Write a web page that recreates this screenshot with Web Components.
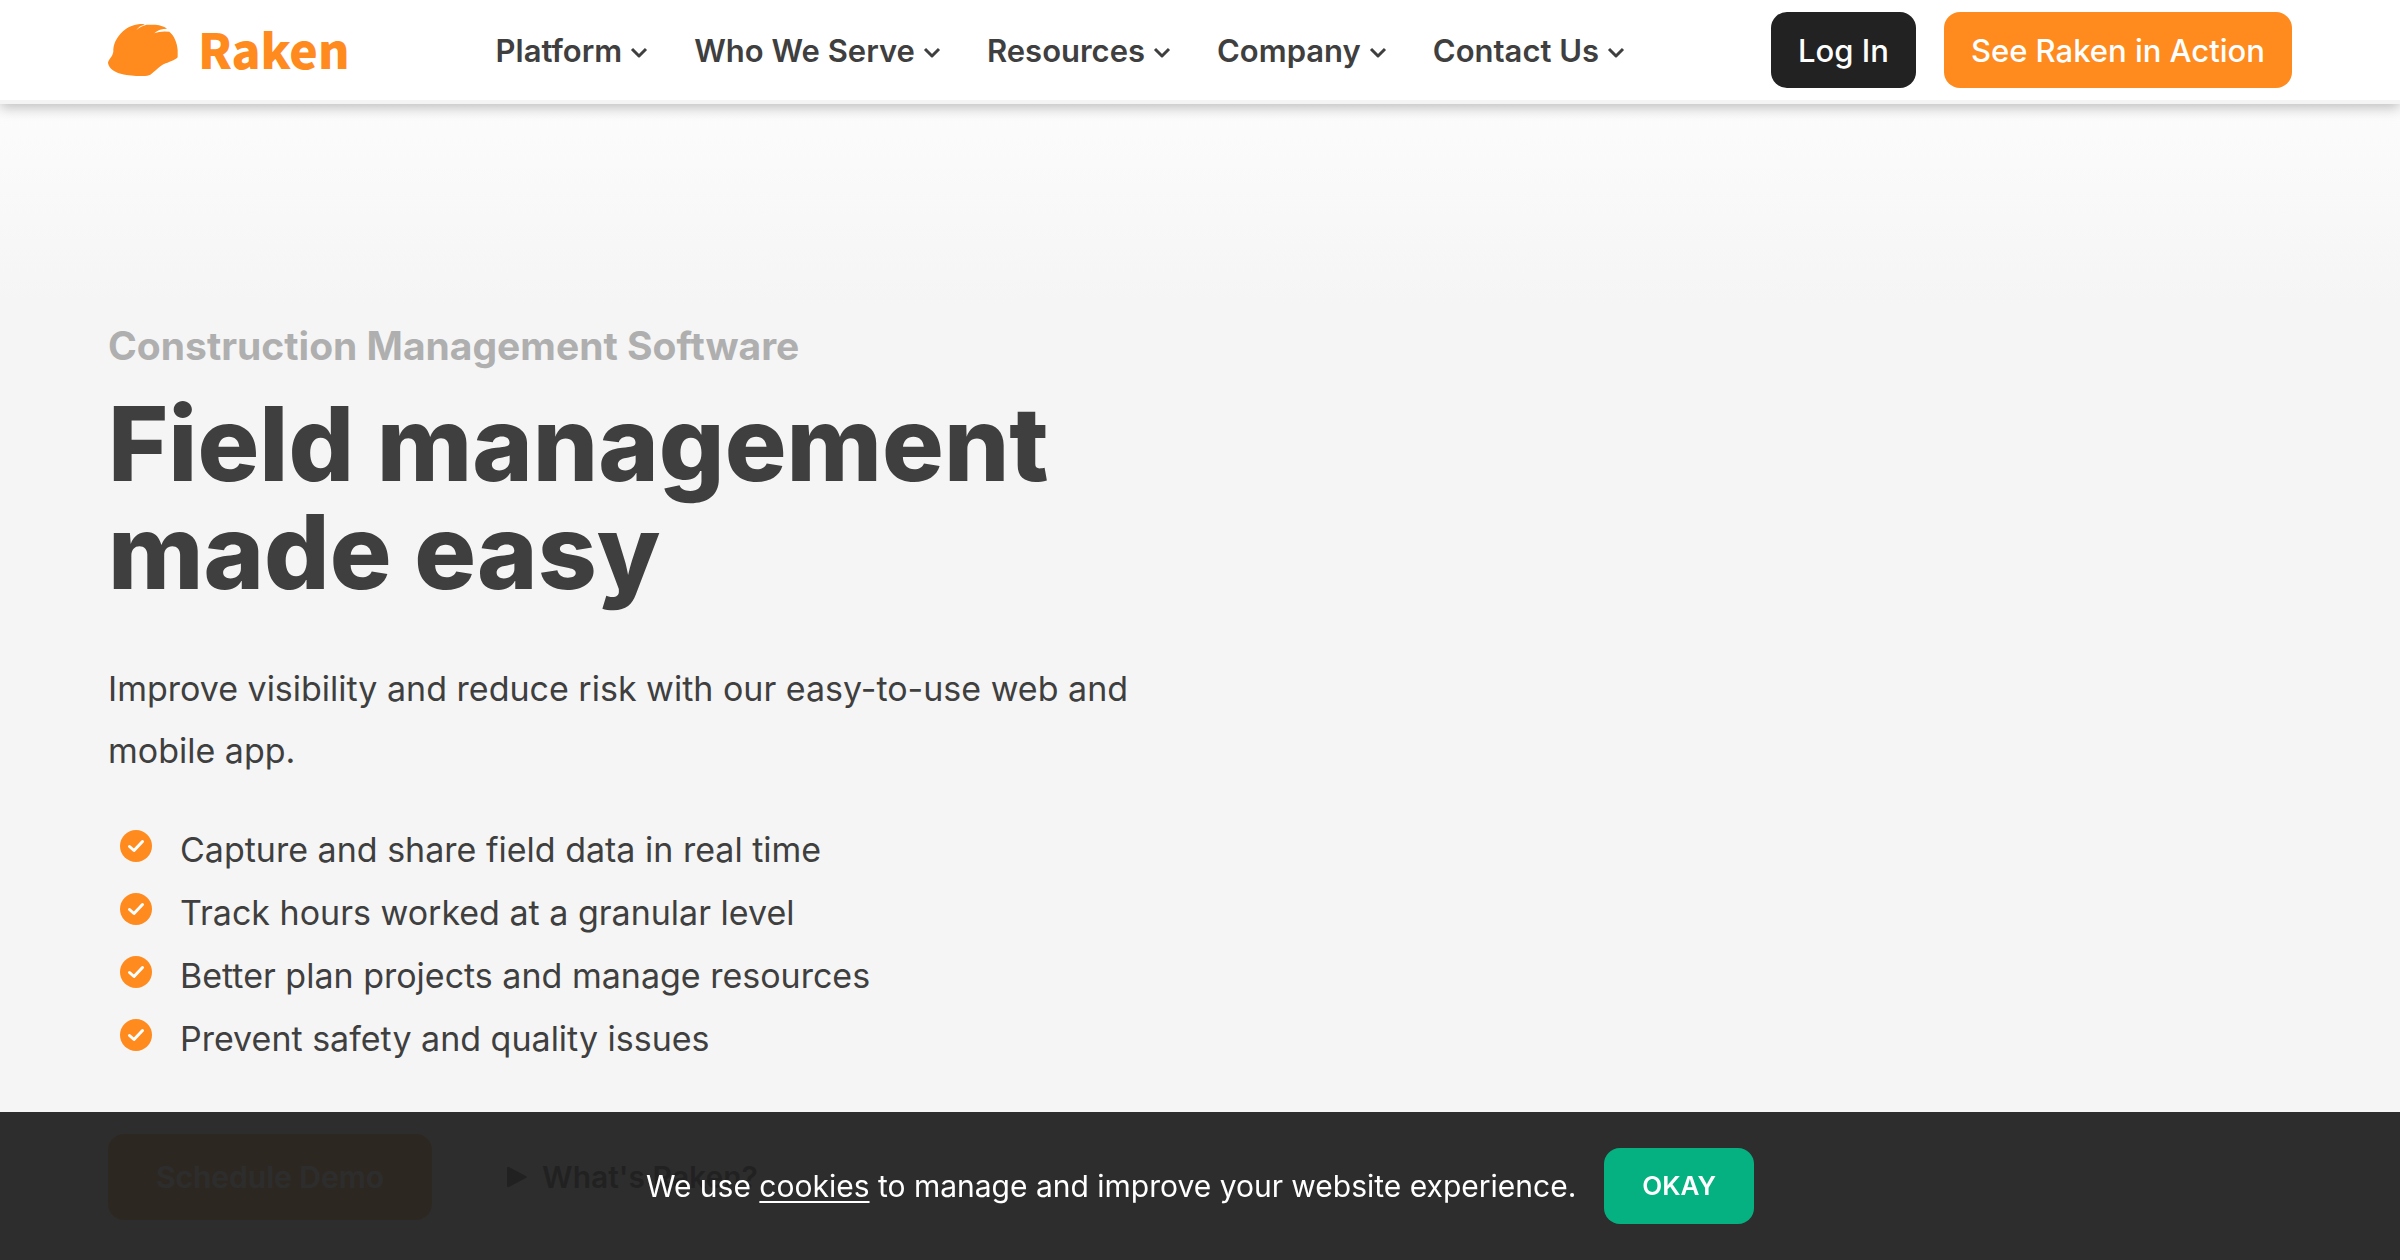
<!DOCTYPE html>
<html lang="en">
<head>
<meta charset="utf-8">
<title>Raken | Construction Management Software</title>
<meta name="viewport" content="width=device-width, initial-scale=1">
<style>
  :root {
    --orange: #ff8b1f;
    --ink: #3f3f3f;
    --dark: #222;
    --gutter: 108px;
  }
  body {
    margin: 0;
    min-height: 100vh;
    background: #f5f5f5;
    color: var(--ink);
    font-family: Inter, "Liberation Sans", sans-serif;
    font-size: 34px;
  }
</style>
</head>
<body>
<raken-header>
  <raken-logo slot="logo"></raken-logo>
  <raken-nav-item href="#platform">Platform</raken-nav-item>
  <raken-nav-item href="#who">Who We Serve</raken-nav-item>
  <raken-nav-item href="#resources">Resources</raken-nav-item>
  <raken-nav-item href="#company">Company</raken-nav-item>
  <raken-nav-item href="#contact">Contact Us</raken-nav-item>
  <raken-button slot="actions" variant="dark">Log In</raken-button>
  <raken-button slot="actions">See Raken in Action</raken-button>
</raken-header>
<raken-hero>
  <span slot="eyebrow">Construction Management Software</span>
  <span slot="title">Field management made easy</span>
  <span slot="lead">Improve visibility and reduce risk with our easy-to-use web and mobile app.</span>
  <raken-check>Capture and share field data in real time</raken-check>
  <raken-check>Track hours worked at a granular level</raken-check>
  <raken-check>Better plan projects and manage resources</raken-check>
  <raken-check>Prevent safety and quality issues</raken-check>
  <raken-button slot="actions" size="large">Schedule Demo</raken-button>
  <raken-video-link slot="actions" href="#video">What's Raken?</raken-video-link>
</raken-hero>
<raken-cookie-bar>
  We use <a href="#cookies">cookies</a> to manage and improve your website experience.
</raken-cookie-bar>

<script>
/**
 * Defines a custom element that renders the given markup in its shadow root.
 *
 * @param {string} name - The tag name.
 * @param {string} html - The styles and markup.
 * @param {Function} [setup] - Called with the host and its shadow root.
 */
const define = (name, html, setup) => {
  const template = document.createElement('template')
  template.innerHTML = html

  customElements.define(name, class extends HTMLElement {
    constructor () {
      super()
      this.attachShadow({ mode: 'open' })
        .appendChild(template.content.cloneNode(true))
    }

    connectedCallback () {
      setup?.(this, this.shadowRoot)
    }
  })
}

/**
 * Passes the host's href on to the link inside it.
 *
 * @param {HTMLElement} host - The element.
 * @param {ShadowRoot} root - Its shadow root.
 */
const passHref = (host, root) => {
  root.querySelector('a').setAttribute('href', host.getAttribute('href') || '#')
}

define('raken-logo', `
  <style>
    :host { display: block; }
    a {
      display: flex;
      align-items: center;
      gap: 20px;
      color: var(--orange);
      font: 900 48px/60px "Noto Sans CJK SC", "Noto Sans", sans-serif;
      text-decoration: none;
    }
    svg { width: 70px; height: 52px; }
    span { padding-bottom: 4px; }
  </style>
  <a href="#home">
    <svg viewBox="0 0 210 156" fill="currentColor" aria-hidden="true">
      <path d="M0 115C3 104 13 99 16 83C16 66 20 52 32 36C48 15 70 2 96 0Q105-1 110 2C99 4 91 9 85 19Q96 7 116 2H142C158 3 170 8 177 14C163 14 148 18 139 28Q157 20 184 23C199 35 208 58 209 79V98C208 105 188 112 173 118C150 128 143 142 127 152C114 158 79 157 56 153C32 150 9 141 2 124Q0 119 0 115Z"/>
    </svg>
    <span>Raken</span>
  </a>
`)

define('raken-nav-item', `
  <style>
    :host { display: block; }
    a {
      display: flex;
      align-items: center;
      gap: 8px;
      padding-top: 2px;
      color: var(--ink);
      font-size: 31px;
      font-weight: 600;
      line-height: 40px;
      text-decoration: none;
      white-space: nowrap;
    }
    svg { width: 18px; height: 12px; margin-top: 4px; }
  </style>
  <a href="#">
    <slot></slot>
    <svg viewBox="0 0 18 12" fill="none" stroke="currentColor" stroke-width="3" stroke-linejoin="round" aria-hidden="true">
      <path d="M2 2L9 9L16 2"/>
    </svg>
  </a>
`, passHref)

define('raken-button', `
  <style>
    :host { display: block; }
    button {
      display: block;
      padding: 19px 27px 17px;
      border: 0;
      border-radius: 16px;
      background: var(--orange);
      color: #fff;
      font: inherit;
      font-size: 31px;
      font-weight: 500;
      line-height: 40px;
      white-space: nowrap;
      cursor: pointer;
    }
    :host([variant="dark"]) button { background: var(--dark); }
    :host([variant="green"]) button {
      padding: 18px 38px;
      background: #05b180;
      font-size: 26px;
      font-weight: 600;
    }
    :host([size="large"]) button {
      padding: 23px 48px;
      font-size: 30px;
      font-weight: 600;
    }
  </style>
  <button type="button"><slot></slot></button>
`)

define('raken-header', `
  <style>
    :host {
      position: sticky;
      top: 0;
      z-index: 1;
      display: flex;
      align-items: center;
      justify-content: space-between;
      padding: 12px var(--gutter);
      border-bottom: 4px solid #f4f4f4;
      background: #fff;
      box-shadow: 0 4px 12px rgba(0, 0, 0, .24);
    }
    nav { display: flex; gap: 46px; }
    .actions { display: flex; gap: 28px; }
  </style>
  <slot name="logo"></slot>
  <nav><slot></slot></nav>
  <div class="actions"><slot name="actions"></slot></div>
`)

define('raken-check', `
  <style>
    :host {
      display: flex;
      align-items: center;
      gap: 28px;
      padding-left: 12px;
      line-height: 63px;
    }
    svg { flex: none; width: 32px; height: 32px; margin-bottom: 8px; }
  </style>
  <svg viewBox="0 0 32 32" aria-hidden="true">
    <circle cx="16" cy="16" r="16" fill="var(--orange)"/>
    <path d="M9.500 16.500L14 20.500L22.500 11.500" fill="none" stroke="#fff" stroke-width="3" stroke-linecap="round" stroke-linejoin="round"/>
  </svg>
  <span><slot></slot></span>
`, host => host.setAttribute('role', 'listitem'))

define('raken-video-link', `
  <style>
    :host { display: block; }
    a {
      display: flex;
      align-items: center;
      gap: 14px;
      color: #222;
      font-size: 30px;
      font-weight: 600;
      line-height: 40px;
      text-decoration: none;
    }
    svg { width: 22px; height: 22px; }
  </style>
  <a href="#">
    <svg viewBox="0 0 22 22" fill="currentColor" aria-hidden="true">
      <path d="M1 2Q1 0 3 1L20 10Q22 11 20 12L3 21Q1 22 1 20Z"/>
    </svg>
    <slot></slot>
  </a>
`, passHref)

define('raken-hero', `
  <style>
    :host {
      display: block;
      padding: 216px var(--gutter) 40px;
      background: linear-gradient(#fcfcfc, #f5f5f5 200px);
    }
    .content { max-width: 1040px; }
    h1, h2, p { margin: 0; }
    h2 {
      color: #afafaf;
      font-size: 39px;
      font-weight: 700;
      line-height: 52px;
    }
    h1 {
      max-width: 1000px;
      margin-top: 18px;
      font-size: 103px;
      font-weight: 800;
      line-height: 108px;
    }
    p { margin-top: 52px; line-height: 62px; }
    .list { margin-top: 36px; }
    .actions {
      display: flex;
      align-items: center;
      gap: 74px;
      margin-top: 64px;
    }
  </style>
  <div class="content">
    <h2><slot name="eyebrow"></slot></h2>
    <h1><slot name="title"></slot></h1>
    <p><slot name="lead"></slot></p>
    <div class="list" role="list"><slot></slot></div>
    <div class="actions"><slot name="actions"></slot></div>
  </div>
`)

define('raken-cookie-bar', `
  <style>
    :host {
      position: fixed;
      right: 0;
      bottom: 0;
      left: 0;
      z-index: 2;
      display: flex;
      align-items: center;
      justify-content: center;
      gap: 28px;
      padding: 36px var(--gutter);
      background: rgba(34, 34, 34, .95);
      color: #fff;
      font-size: 30px;
      line-height: 40px;
    }
    p { margin: 0; }
    ::slotted(a) {
      color: inherit;
      text-decoration-thickness: 2px;
      text-underline-offset: 4px;
    }
  </style>
  <p><slot></slot></p>
  <raken-button variant="green">OKAY</raken-button>
`, (host, root) => {
  root.querySelector('raken-button').addEventListener('click', () => host.remove())
})
</script>
</body>
</html>
